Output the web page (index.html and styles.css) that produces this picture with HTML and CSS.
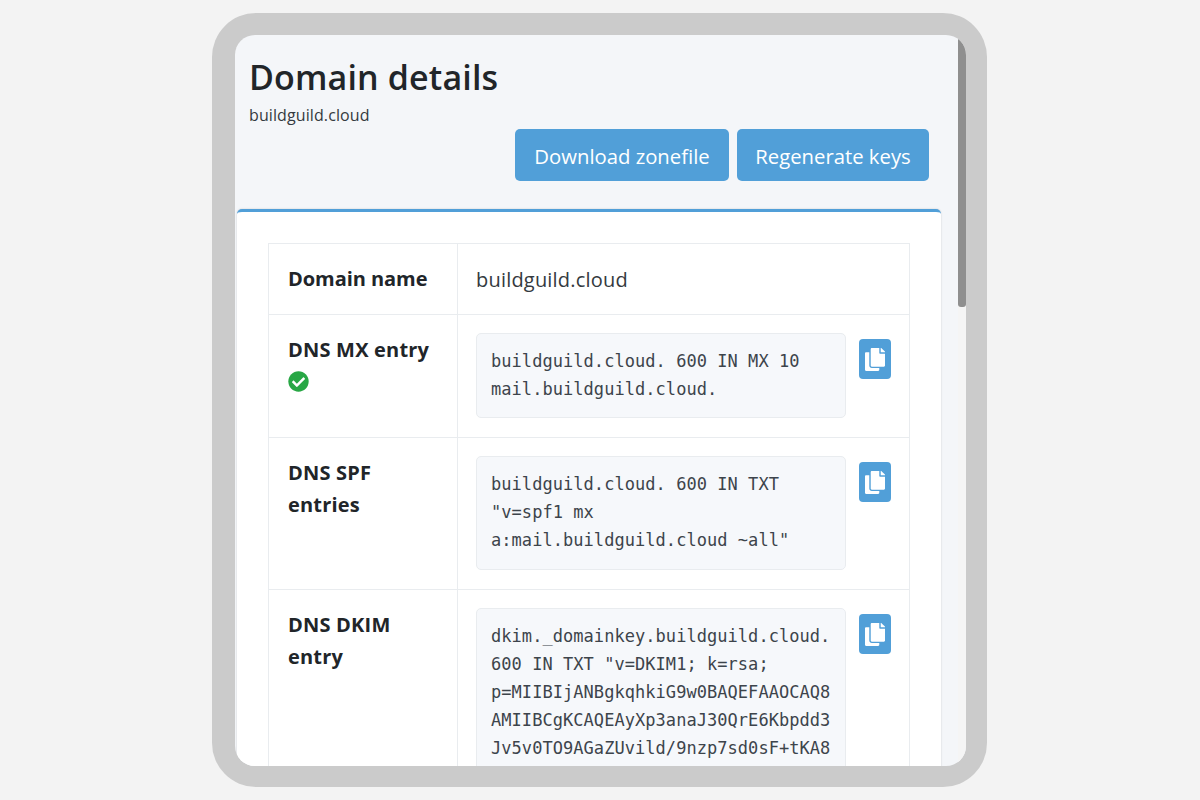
FILE: index.html
```html
<!DOCTYPE html>
<html lang="en">
<head>
<meta charset="utf-8">
<title>Domain details</title>
<link rel="stylesheet" href="styles.css">
</head>
<body>
<div class="frame">
  <div class="screen">
    <main class="content">
      <h1 class="title">Domain details</h1>
      <p class="subtitle">buildguild.cloud</p>
      <div class="actions">
        <button class="btn">Download zonefile</button>
        <button class="btn">Regenerate keys</button>
      </div>
      <section class="card">
        <table class="details">
          <tr class="row-name">
            <th>Domain name</th>
            <td>buildguild.cloud</td>
          </tr>
          <tr>
            <th>DNS MX entry
              <svg class="check" viewBox="0 0 512 512"><path fill="#28a745" d="M504 256c0 137-111 248-248 248S8 393 8 256 119 8 256 8s248 111 248 248z"/><path fill="#fff" d="M227 387l184-184c6-6 6-16 0-22l-23-23c-6-6-16-6-22 0L216 308l-70-70c-6-6-16-6-22 0l-23 23c-6 6-6 16 0 22l104 104c6 6 16 6 22 0z"/></svg>
            </th>
            <td>
              <div class="entry">
                <pre class="code">buildguild.cloud. 600 IN MX 10
mail.buildguild.cloud.</pre>
                <button class="copy" aria-label="Copy"><svg viewBox="0 0 448 512"><path fill="#fff" d="M320 448v40c0 13-11 24-24 24H24c-13 0-24-11-24-24V120c0-13 11-24 24-24h72v296c0 31 25 56 56 56h168zm0-344V0H152c-13 0-24 11-24 24v368c0 13 11 24 24 24h272c13 0 24-11 24-24V128H344c-13 0-24-11-24-24zm121-31L375 7c-4-4-11-7-17-7h-6v96h96v-6c0-6-3-13-7-17z"/></svg></button>
              </div>
            </td>
          </tr>
          <tr>
            <th>DNS SPF<br>entries</th>
            <td>
              <div class="entry">
                <pre class="code code-spf">buildguild.cloud. 600 IN TXT
"v=spf1 mx
a:mail.buildguild.cloud ~all"</pre>
                <button class="copy" aria-label="Copy"><svg viewBox="0 0 448 512"><path fill="#fff" d="M320 448v40c0 13-11 24-24 24H24c-13 0-24-11-24-24V120c0-13 11-24 24-24h72v296c0 31 25 56 56 56h168zm0-344V0H152c-13 0-24 11-24 24v368c0 13 11 24 24 24h272c13 0 24-11 24-24V128H344c-13 0-24-11-24-24zm121-31L375 7c-4-4-11-7-17-7h-6v96h96v-6c0-6-3-13-7-17z"/></svg></button>
              </div>
            </td>
          </tr>
          <tr>
            <th>DNS DKIM<br>entry</th>
            <td>
              <div class="entry">
                <pre class="code">dkim._domainkey.buildguild.cloud.
600 IN TXT "v=DKIM1; k=rsa;
p=MIIBIjANBgkqhkiG9w0BAQEFAAOCAQ8
AMIIBCgKCAQEAyXp3anaJ30QrE6Kbpdd3
Jv5v0TO9AGaZUvild/9nzp7sd0sF+tKA8</pre>
                <button class="copy" aria-label="Copy"><svg viewBox="0 0 448 512"><path fill="#fff" d="M320 448v40c0 13-11 24-24 24H24c-13 0-24-11-24-24V120c0-13 11-24 24-24h72v296c0 31 25 56 56 56h168zm0-344V0H152c-13 0-24 11-24 24v368c0 13 11 24 24 24h272c13 0 24-11 24-24V128H344c-13 0-24-11-24-24zm121-31L375 7c-4-4-11-7-17-7h-6v96h96v-6c0-6-3-13-7-17z"/></svg></button>
              </div>
            </td>
          </tr>
        </table>
      </section>
    </main>
    <div class="scrollbar"><div class="thumb"></div></div>
  </div>
</div>
</body>
</html>
```

FILE: styles.css
```css
* { box-sizing: border-box; }
html, body { height: 100%; }
body {
  margin: 0;
  background: #f3f3f3;
  display: flex;
  justify-content: center;
  align-items: flex-start;
  overflow: hidden;
  font-family: "Open Sans", "Noto Sans", sans-serif;
  color: #212529;
}
.frame {
  margin-top: 13px;
  margin-right: 1px;
  width: 775px;
  height: 774px;
  padding: 22px 21px 21px 23px;
  background: #cbcbcb;
  border-radius: 44px;
}
.screen {
  height: 731px;
  display: flex;
  background: #f4f6f9;
  border-radius: 20px;
  overflow: hidden;
}
.content {
  flex: 1;
  min-width: 0;
  padding: 19px 17px 0 2px;
  overflow: hidden;
}
.title {
  margin: 0 0 0 12px;
  font-size: 34px;
  line-height: 46px;
  font-weight: 600;
  letter-spacing: 0.15px;
}
.subtitle {
  margin: 5px 0 0 12px;
  font-size: 16px;
  line-height: 20px;
  letter-spacing: 0.1px;
  color: #343a40;
}
.actions {
  display: flex;
  justify-content: flex-end;
  gap: 8px;
  margin-top: 4px;
  padding-right: 12px;
}
.btn {
  height: 52px;
  width: 214px;
  padding: 2px 0 0;
  border: 0;
  border-radius: 5px;
  background: #519fd8;
  color: #fff;
  font-family: inherit;
  font-size: 20.3px;
}
.btn + .btn {
  width: 192px;
}
.card {
  margin-top: 28px;
  height: 600px;
  padding: 31px 31px 0;
  background: #fff;
  border-top: 3px solid #519fd8;
  border-radius: 5px 5px 0 0;
  box-shadow: 0 0 2px rgba(0, 0, 0, .18);
}
.details {
  width: 642px;
  table-layout: fixed;
  border-collapse: collapse;
}
.details th, .details td {
  border: 1px solid #e9ecef;
  vertical-align: top;
  text-align: left;
  padding: 18px 18px 19px;
}
.details th {
  width: 189px;
  padding-top: 19px;
  padding-left: 19px;
  font-size: 20px;
  line-height: 32px;
  font-weight: 700;
  letter-spacing: 0.2px;
}
.details .row-name th, .details .row-name td {
  height: 71px;
  vertical-align: middle;
  padding-top: 0;
  padding-bottom: 0;
}
.details .row-name th {
  letter-spacing: -0.05px;
}
.row-name td {
  font-size: 20px;
  letter-spacing: 0.2px;
  color: #343a40;
}
.check {
  display: block;
  width: 21px;
  height: 21px;
  margin-top: 5px;
}
.entry {
  display: flex;
  align-items: flex-start;
  gap: 13px;
}
.code {
  margin: 0;
  width: 370px;
  flex: none;
  padding: 13px 14px 14px;
  background: #f6f8fb;
  border: 1px solid #e9ecef;
  border-radius: 5px;
  font-family: "DejaVu Sans Mono", monospace;
  font-size: 17px;
  line-height: 28px;
  letter-spacing: 0.05px;
  color: #3d444b;
  white-space: pre;
  overflow: hidden;
}
.code-spf {
  padding-bottom: 15px;
}
.copy {
  flex: none;
  width: 32px;
  height: 40px;
  margin-top: 6px;
  padding: 0;
  border: 0;
  border-radius: 4px;
  background: #519fd8;
  display: flex;
  align-items: center;
  justify-content: center;
}
.copy svg {
  width: 20px;
  height: 23px;
}
.scrollbar {
  flex: none;
  width: 8px;
  background: #f5f5f5;
}
.thumb {
  height: 272px;
  background: #8f8f8f;
  border-radius: 0 0 3px 3px;
}
```
